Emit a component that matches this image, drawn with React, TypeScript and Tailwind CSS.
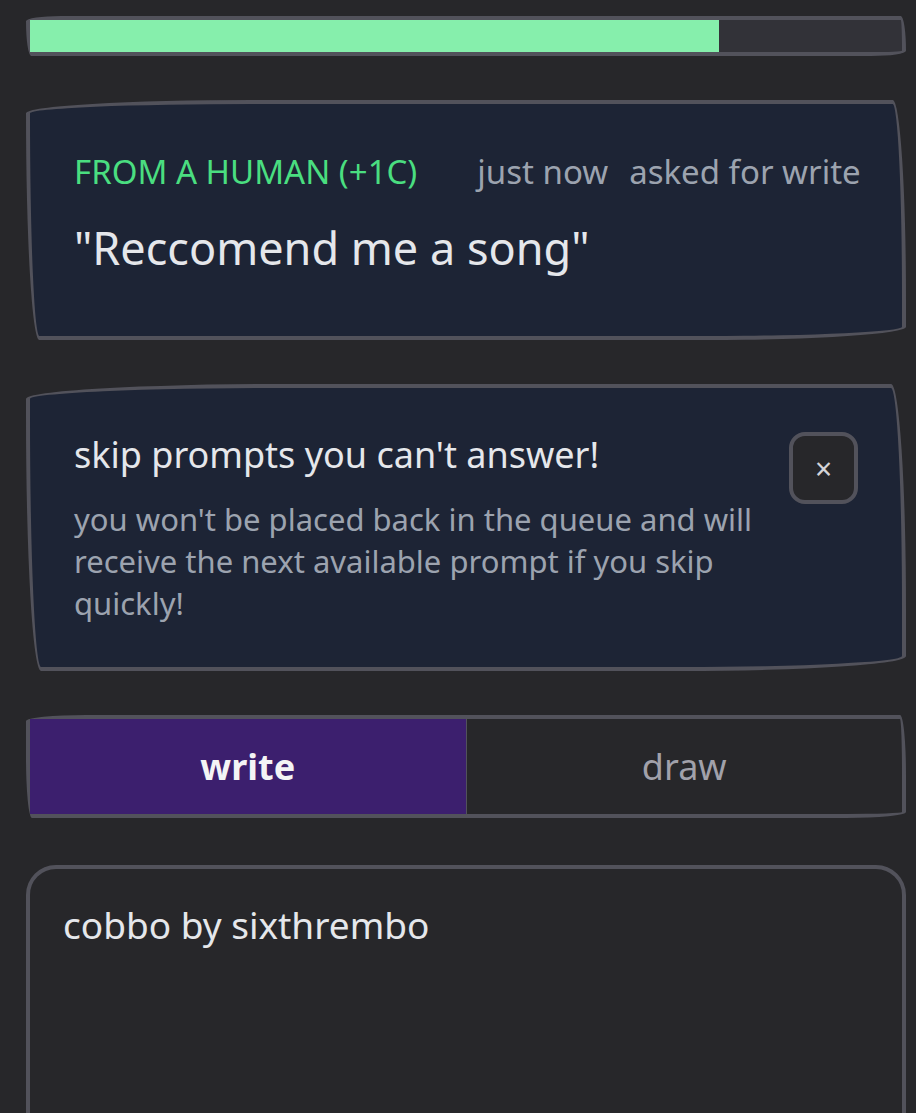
import { useState } from 'react';

const wobble = 'rounded-[255px_15px_225px_15px/15px_225px_15px_255px]';

function App() {
  const [mode, setMode] = useState<'write' | 'draw'>('write');
  const [text, setText] = useState('cobbo by sixthrembo');
  const [showTip, setShowTip] = useState(true);

  return (
    <div className="min-h-screen bg-[#27272a] pt-4 pl-[26px] pr-[10px] font-['Noto_Sans',sans-serif] text-[#e5e7eb]">
      {/* progress */}
      <div className="h-10 rounded-[40px_6px_40px_6px/6px_40px_6px_40px] border-4 border-[#52525b] bg-[#323238]">
        <div className="h-full w-[79%] bg-[#86efac]" />
      </div>

      {/* prompt card */}
      <div className={`mt-11 border-4 border-[#52525b] bg-[#1d2435] pl-11 pr-4 pt-12 pb-[58px] ${wobble}`}>
        <div className="flex items-baseline whitespace-nowrap text-[33px] leading-[40px]">
          <span className="text-[#4ade80]">FROM A HUMAN (+1C)</span>
          <span className="ml-[60px] text-[#9ca3af]">just now</span>
          <span className="ml-[21px] text-[#9ca3af]">asked for write</span>
        </div>
        <p className="mt-[26px] text-[45px] leading-[60px]">"Reccomend me a song"</p>
      </div>

      {/* tip */}
      {showTip && (
        <div className={`mt-11 flex items-start border-4 border-[#52525b] bg-[#1d2435] px-11 pt-[44px] pb-[43px] ${wobble}`}>
          <div className="flex-1">
            <p className="text-[36px] leading-[46px]">skip prompts you can't answer!</p>
            <p className="mt-5 max-w-[700px] text-[31px] leading-[42px] text-[#9ca3af]">
              you won't be placed back in the queue and will receive the next available prompt if you skip quickly!
            </p>
          </div>
          <button
            onClick={() => setShowTip(false)}
            className="ml-4 flex h-[72px] w-[69px] items-center justify-center rounded-2xl border-4 border-[#52525b] bg-[#27272a] text-[30px] text-[#d4d4d8]"
          >
            ×
          </button>
        </div>
      )}

      {/* mode tabs */}
      <div className="mt-11 flex h-[103px] rounded-[60px_6px_60px_6px/6px_60px_6px_60px] border-4 border-[#52525b]">
        <button
          onClick={() => setMode('write')}
          className={`flex-1 text-[36px] ${mode === 'write' ? 'bg-[#3c1f6e] font-bold text-[#f4f4f5]' : 'text-[#a1a1aa]'}`}
        >
          write
        </button>
        <div className="w-px bg-[#52525b]" />
        <button
          onClick={() => setMode('draw')}
          className={`flex-1 text-[36px] ${mode === 'draw' ? 'bg-[#3c1f6e] font-bold text-[#f4f4f5]' : 'text-[#a1a1aa]'}`}
        >
          draw
        </button>
      </div>

      {/* answer */}
      <textarea
        value={text}
        onChange={(e) => setText(e.target.value)}
        className="mt-[47px] block h-[300px] w-full resize-none rounded-[30px] border-4 border-[#52525b] bg-[#27272a] px-[33px] pt-[31px] text-[37px] leading-[50px] text-[#e5e7eb] outline-none"
      />
    </div>
  );
}

export default App;
